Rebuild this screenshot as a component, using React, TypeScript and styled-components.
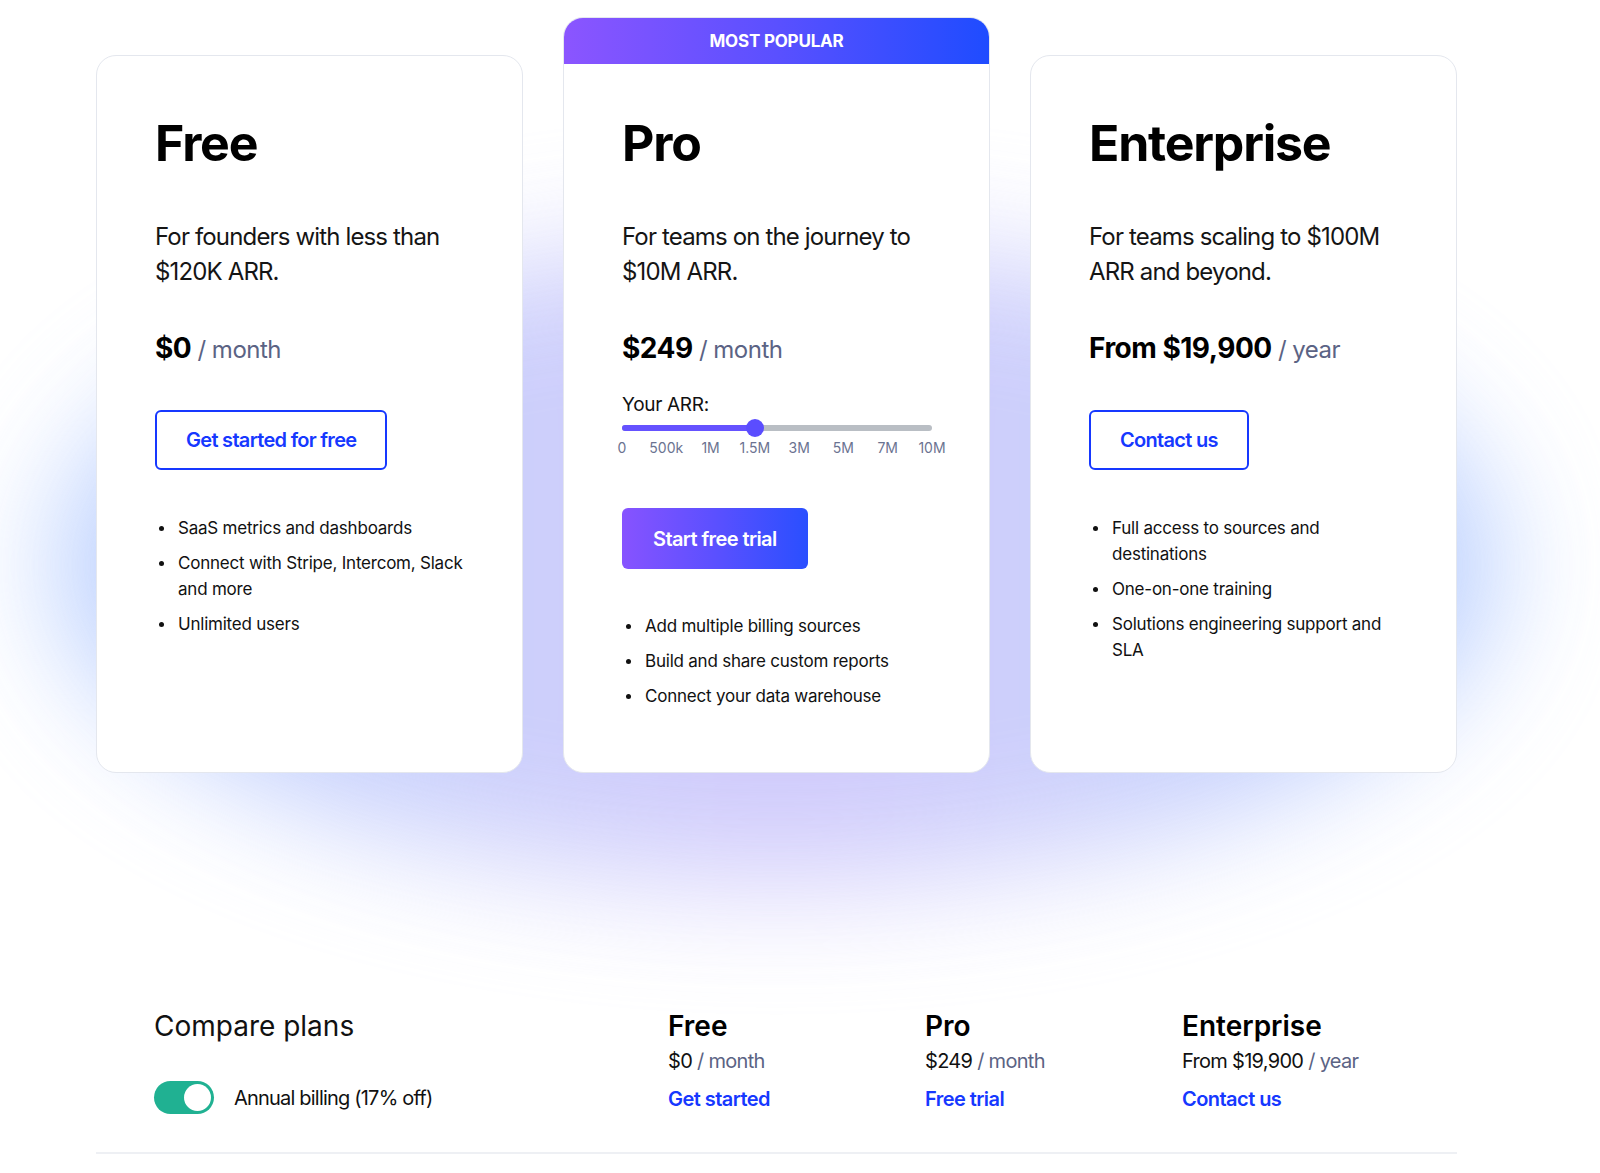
import * as React from "react";
import styled, {createGlobalStyle} from "styled-components";

const GlobalStyle = createGlobalStyle`
  body {
    margin: 0;
    background: #ffffff;
    font-family: Inter, "Noto Sans", "Liberation Sans", sans-serif;
    color: #111111;
    -webkit-font-smoothing: antialiased;
  }
  * {
    box-sizing: border-box;
  }
`;

const BLUE = "#1638ff";
const SLATE = "#5b6384";

const Page = styled.div`
  width: 1600px;
  padding: 17px 143px 19px 96px;
  overflow: hidden;
`;

const CardRow = styled.div`
  position: relative;
  isolation: isolate;
  display: grid;
  grid-template-columns: repeat(3, 427px);
  column-gap: 40px;

  &::before {
    content: "";
    position: absolute;
    z-index: -1;
    left: -40px;
    right: -40px;
    top: 230px;
    bottom: -110px;
    border-radius: 50%;
    background: linear-gradient(90deg, #a9c6ff 0%, #c4c8fb 30%, #c9c2fb 50%, #c4c8fb 70%, #a9c6ff 100%);
    filter: blur(60px);
    opacity: 0.85;
  }
`;

const Card = styled.div<{ $featured?: boolean }>`
  display: flex;
  flex-direction: column;
  margin-top: ${p => (p.$featured ? "0" : "38px")};
  background: #ffffff;
  border: 1px solid #e4e7ee;
  border-radius: 20px;
  overflow: hidden;
`;

const Badge = styled.div`
  height: 46px;
  display: flex;
  align-items: center;
  justify-content: center;
  background: linear-gradient(90deg, #8b55ff 0%, #5a50ff 50%, #1f4cff 100%);
  color: #ffffff;
  font-size: 17px;
  font-weight: 700;
  letter-spacing: -0.2px;
  text-transform: uppercase;
`;

const CardBody = styled.div<{ $featured?: boolean }>`
  display: flex;
  flex-direction: column;
  align-items: flex-start;
  padding: ${p => (p.$featured ? "49px" : "57px")} 58px 63px;
`;

const PlanName = styled.h2`
  margin: 0;
  font-size: 50px;
  line-height: 60px;
  font-weight: 700;
  color: #000000;
  letter-spacing: -1.2px;
`;

const Description = styled.p`
  margin: 46px 0 0;
  font-size: 24px;
  line-height: 35px;
  letter-spacing: -0.85px;
  color: #151515;
`;

const Price = styled.div`
  margin-top: 41px;
  line-height: 36px;
  font-size: 24px;
  letter-spacing: -0.5px;
  color: ${SLATE};
`;

const Amount = styled.span`
  font-size: 28px;
  font-weight: 700;
  color: #000000;
`;

const OutlineButton = styled.button`
  margin-top: 42px;
  height: 60px;
  padding: 0 29px;
  border: 2px solid ${BLUE};
  border-radius: 6px;
  background: #ffffff;
  color: ${BLUE};
  font-family: inherit;
  font-size: 20px;
  font-weight: 600;
  letter-spacing: -0.7px;
`;

const GradientButton = styled.button`
  margin-top: 50px;
  height: 61px;
  padding: 0 31px;
  border: none;
  border-radius: 6px;
  background: linear-gradient(90deg, #8753ff 0%, #5b50ff 50%, #2a4fff 100%);
  color: #ffffff;
  font-family: inherit;
  font-size: 20px;
  font-weight: 600;
  letter-spacing: -0.6px;
`;

const ArrLabel = styled.div`
  margin-top: 25px;
  font-size: 19px;
  line-height: 24px;
  letter-spacing: -0.3px;
  color: #111111;
`;

const Track = styled.div`
  position: relative;
  margin-top: 8px;
  width: 310px;
  height: 6px;
  border-radius: 3px;
  background: #b9bec4;
`;

const TrackFill = styled.div`
  height: 100%;
  border-radius: 3px;
  background: #6552ff;
`;

const Thumb = styled.div`
  position: absolute;
  top: -6px;
  width: 18px;
  height: 18px;
  margin-left: -9px;
  border-radius: 50%;
  background: #5b4dff;
`;

const Ticks = styled.div`
  display: grid;
  grid-template-columns: repeat(8, 44.29px);
  margin: 7px 0 0 -22.14px;
  font-size: 14px;
  line-height: 20px;
  color: #6b7391;
  text-align: center;
`;

const Features = styled.ul<{ $gap: number }>`
  margin: ${p => p.$gap}px 0 0;
  padding: 0;
  list-style: none;
`;

const Feature = styled.li`
  display: flex;
  font-size: 17px;
  line-height: 26px;
  letter-spacing: -0.22px;
  color: #111111;

  & + & {
    margin-top: 9px;
  }

  &::before {
    content: "";
    flex: 0 0 5px;
    height: 5px;
    margin: 11px 14px 0 4px;
    border-radius: 50%;
    background: #111111;
  }
`;

const Compare = styled.section`
  display: grid;
  grid-template-columns: 514px repeat(3, 257px);
  margin-top: 236px;
  padding: 0 0 38px 58px;
  border-bottom: 2px solid #eef0f4;
`;

const CompareTitle = styled.h3`
  margin: 0;
  font-size: 28px;
  line-height: 34px;
  font-weight: 400;
  color: #111111;
`;

const BillingRow = styled.div`
  display: flex;
  align-items: center;
  margin-top: 38px;
  font-size: 20px;
  letter-spacing: -0.8px;
  color: #111111;
`;

const Toggle = styled.div<{ $on: boolean }>`
  position: relative;
  flex: 0 0 60px;
  height: 33px;
  margin-right: 20px;
  border-radius: 17px;
  background: ${p => (p.$on ? "#20b192" : "#c9ccd3")};

  &::after {
    content: "";
    position: absolute;
    top: 3px;
    left: ${p => (p.$on ? "30px" : "3px")};
    width: 27px;
    height: 27px;
    border-radius: 50%;
    background: #ffffff;
  }
`;

const PlanColumn = styled.div`
  display: flex;
  flex-direction: column;
  align-items: flex-start;
`;

const ColumnName = styled.div`
  font-size: 28px;
  line-height: 34px;
  font-weight: 600;
  color: #000000;
`;

const ColumnPrice = styled.div`
  margin-top: 4px;
  font-size: 20px;
  line-height: 28px;
  letter-spacing: -0.7px;
  color: ${SLATE};

  b {
    font-weight: 400;
    color: #111111;
  }
`;

const ColumnLink = styled.a`
  margin-top: 10px;
  font-size: 20px;
  line-height: 28px;
  font-weight: 600;
  letter-spacing: -0.55px;
  color: ${BLUE};
  text-decoration: none;
`;

const ticks = ["0", "500k", "1M", "1.5M", "3M", "5M", "7M", "10M"];
const arrIndex = 3;

const plans = [
  {name: "Free", price: "$0", unit: "month", link: "Get started"},
  {name: "Pro", price: "$249", unit: "month", link: "Free trial"},
  {name: "Enterprise", price: "From $19,900", unit: "year", link: "Contact us"},
];

const ArrSlider: React.FC = () => {
  const pct = (arrIndex / (ticks.length - 1)) * 100;
  return (
    <>
      <ArrLabel>Your ARR:</ArrLabel>
      <Track>
        <TrackFill style={{width: `${pct}%`}}/>
        <Thumb style={{left: `${pct}%`}}/>
      </Track>
      <Ticks>
        {ticks.map(t => <span key={t}>{t}</span>)}
      </Ticks>
    </>
  );
};

export default function App() {
  return (
    <Page>
      <GlobalStyle/>
      <CardRow>
        <Card>
          <CardBody>
            <PlanName>Free</PlanName>
            <Description>For founders with less than $120K ARR.</Description>
            <Price><Amount>$0</Amount> / month</Price>
            <OutlineButton>Get started for free</OutlineButton>
            <Features $gap={45}>
              <Feature>SaaS metrics and dashboards</Feature>
              <Feature>Connect with Stripe, Intercom, Slack and more</Feature>
              <Feature>Unlimited users</Feature>
            </Features>
          </CardBody>
        </Card>

        <Card $featured>
          <Badge>Most popular</Badge>
          <CardBody $featured>
            <PlanName>Pro</PlanName>
            <Description>For teams on the journey to $10M ARR.</Description>
            <Price><Amount>$249</Amount> / month</Price>
            <ArrSlider/>
            <GradientButton>Start free trial</GradientButton>
            <Features $gap={44}>
              <Feature>Add multiple billing sources</Feature>
              <Feature>Build and share custom reports</Feature>
              <Feature>Connect your data warehouse</Feature>
            </Features>
          </CardBody>
        </Card>

        <Card>
          <CardBody>
            <PlanName>Enterprise</PlanName>
            <Description>For teams scaling to $100M ARR and beyond.</Description>
            <Price><Amount>From $19,900</Amount> / year</Price>
            <OutlineButton>Contact us</OutlineButton>
            <Features $gap={45}>
              <Feature>Full access to sources and destinations</Feature>
              <Feature>One-on-one training</Feature>
              <Feature>Solutions engineering support and SLA</Feature>
            </Features>
          </CardBody>
        </Card>
      </CardRow>

      <Compare>
        <div>
          <CompareTitle>Compare plans</CompareTitle>
          <BillingRow>
            <Toggle $on/>
            Annual billing (17% off)
          </BillingRow>
        </div>
        {plans.map(plan =>
          <PlanColumn key={plan.name}>
            <ColumnName>{plan.name}</ColumnName>
            <ColumnPrice><b>{plan.price}</b> / {plan.unit}</ColumnPrice>
            <ColumnLink href="#">{plan.link}</ColumnLink>
          </PlanColumn>
        )}
      </Compare>
    </Page>
  );
}
